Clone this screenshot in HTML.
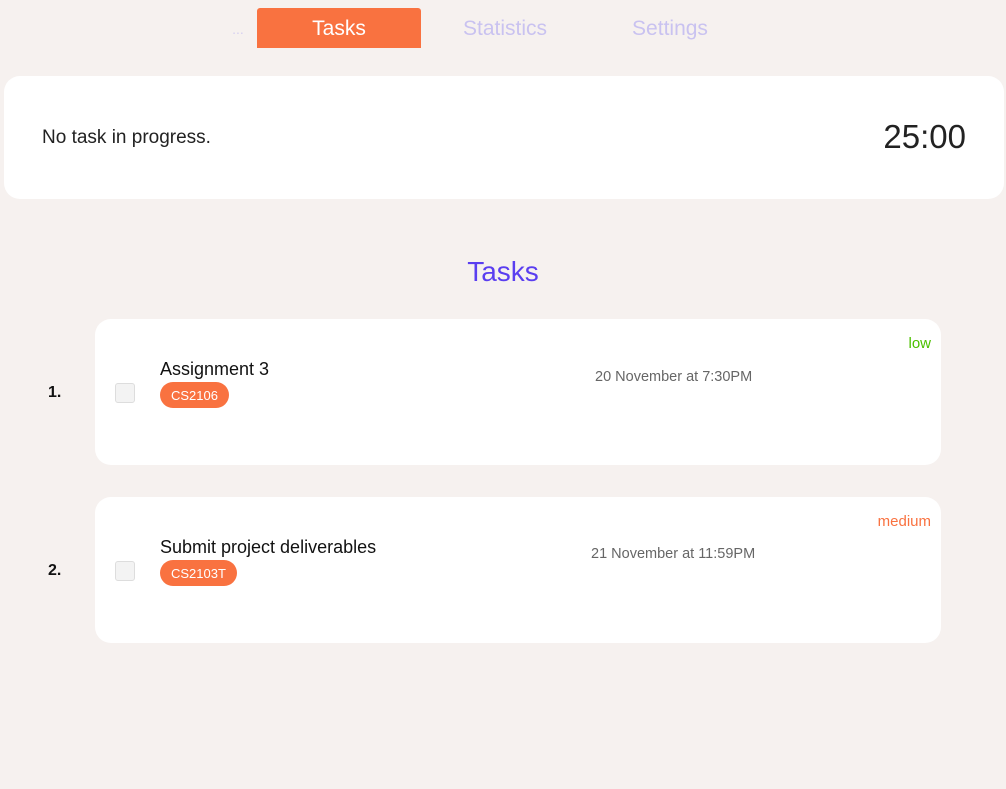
<!DOCTYPE html>
<html><head><meta charset="utf-8"><style>
body{margin:0;width:1006px;height:789px;background:#f6f1ef;font-family:"Liberation Sans",sans-serif;position:relative;overflow:hidden}
.a{position:absolute}
.tab{position:absolute;top:8px;height:40px;line-height:42px;font-size:21px;text-align:center}
.card{position:absolute;background:#fff;border-radius:16px}
.chk{position:absolute;left:20px;width:18px;height:18px;border:1px solid #ddd;border-radius:3px;background:#f3f3f3}
.tag{position:absolute;left:65px;height:26px;line-height:27px;padding:0 11px;background:#f97240;color:#fff;border-radius:13px;font-size:13px}
.title{position:absolute;left:65px;font-size:18px;color:#111}
.date{position:absolute;font-size:14.5px;color:#666}
.num{position:absolute;left:48px;font-size:16px;color:#111;font-weight:bold}
</style></head><body>
<div class="tab" style="left:229px;width:18px;color:#d6d0f0;font-size:14px">...</div>
<div class="tab" style="left:257px;width:164px;background:#f97240;color:#fff;border-radius:3px 3px 0 0">Tasks</div>
<div class="tab" style="left:440px;width:130px;color:#c9c2f0">Statistics</div>
<div class="tab" style="left:605px;width:130px;color:#c9c2f0">Settings</div>
<div class="card" style="left:4px;top:76px;width:1000px;height:123px">
<div class="a" style="left:38px;top:51px;font-size:19px;color:#222">No task in progress.</div>
<div class="a" style="right:38px;top:42px;font-size:33px;color:#222">25:00</div>
</div>
<div class="a" style="left:0;width:1006px;top:256px;text-align:center;font-size:28px;color:#5a3ef0">Tasks</div>
<div class="num" style="top:384px">1.</div>
<div class="card" style="left:95px;top:319px;width:846px;height:146px">
<div class="title" style="top:40px">Assignment 3</div>
<div class="tag" style="top:63px">CS2106</div>
<div class="chk" style="top:64px"></div>
<div class="date" style="left:500px;top:50px">20 November at 7:30PM</div>
<div class="a" style="right:10px;top:16px;font-size:15px;color:#4cc000">low</div>
</div>
<div class="num" style="top:562px">2.</div>
<div class="card" style="left:95px;top:497px;width:846px;height:146px">
<div class="title" style="top:40px">Submit project deliverables</div>
<div class="tag" style="top:63px">CS2103T</div>
<div class="chk" style="top:64px"></div>
<div class="date" style="left:496px;top:49px">21 November at 11:59PM</div>
<div class="a" style="right:10px;top:16px;font-size:15px;color:#f97240">medium</div>
</div>
</body></html>
